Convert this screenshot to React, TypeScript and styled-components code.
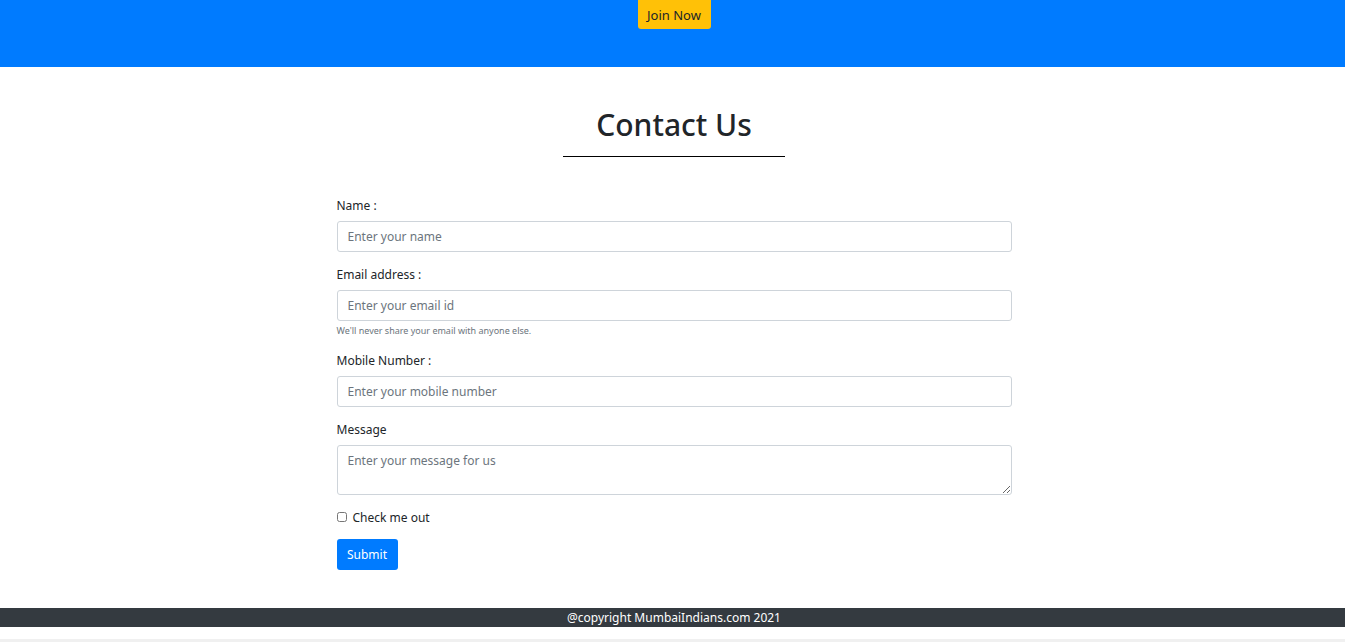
import React, { useState } from 'react'
import styled, { createGlobalStyle } from 'styled-components'

const GlobalStyle = createGlobalStyle`
  * {
    box-sizing: border-box;
  }
  body {
    margin: 0;
    background: #fff;
    color: #212529;
    font-family: 'Noto Sans', 'Open Sans', Arial, sans-serif;
  }
`

const Header = styled.header`
  background: #007bff;
  height: 67px;
  display: flex;
  justify-content: center;
  align-items: flex-start;
  padding-left: 3px;
`

const JoinButton = styled.button`
  height: 29px;
  width: 73px;
  border: none;
  border-radius: 0 0 3px 3px;
  background: #ffc107;
  color: #212529;
  font-family: inherit;
  font-size: 13px;
  padding: 0;
  cursor: pointer;
`

const Main = styled.main`
  display: flex;
  flex-direction: column;
  align-items: center;
  padding: 37px 0 38px 3px;
`

const Title = styled.h2`
  margin: 0;
  display: inline-block;
  padding: 0 33px 11px;
  border-bottom: 1px solid #000;
  font-size: 30px;
  font-weight: 500;
  line-height: 41px;
  color: #212529;
`

const Form = styled.form`
  width: 675px;
  margin-top: 40px;
`

const Group = styled.div<{ $extra?: number }>`
  margin-bottom: ${p => 14 + (p.$extra || 0)}px;
`

const Label = styled.label`
  display: block;
  font-size: 12px;
  line-height: 18px;
  margin-bottom: 6px;
  color: #212529;
`

const Field = styled.input`
  display: block;
  width: 100%;
  height: 31px;
  padding: 0 10px;
  border: 1px solid #ced4da;
  border-radius: 3px;
  font-family: inherit;
  font-size: 12px;
  color: #495057;
  &::placeholder {
    color: #6c757d;
  }
`

const Area = styled.textarea`
  display: block;
  width: 100%;
  height: 50px;
  padding: 6px 10px;
  border: 1px solid #ced4da;
  border-radius: 3px;
  font-family: inherit;
  font-size: 12px;
  color: #495057;
  resize: vertical;
  &::placeholder {
    color: #6c757d;
  }
`

const Help = styled.small`
  display: block;
  margin-top: 3px;
  font-size: 9px;
  line-height: 13px;
  color: #6c757d;
`

const CheckRow = styled.label`
  display: flex;
  align-items: center;
  gap: 6px;
  font-size: 12px;
  line-height: 18px;
  margin-bottom: 12px;
`

const Check = styled.input`
  margin: 0 0 3px;
  width: 10px;
  height: 10px;
`

const SubmitButton = styled.button`
  height: 31px;
  width: 61px;
  border: none;
  border-radius: 3px;
  background: #007bff;
  color: #fff;
  font-family: inherit;
  font-size: 12px;
  cursor: pointer;
`

const Footer = styled.footer`
  background: #343a40;
  color: #fff;
  height: 19px;
  line-height: 19px;
  font-size: 12px;
  text-align: center;
  padding-left: 3px;
`

const Strip = styled.div`
  height: 3px;
  margin-top: 12px;
  background: #f0f0f0;
`

const App: React.FC = () => {
  const [checked, setChecked] = useState(false)

  return (
    <>
      <GlobalStyle />
      <Header>
        <JoinButton>Join Now</JoinButton>
      </Header>
      <Main>
        <Title>Contact Us</Title>
        <Form onSubmit={e => e.preventDefault()}>
          <Group>
            <Label htmlFor="name">Name :</Label>
            <Field id="name" type="text" placeholder="Enter your name" />
          </Group>
          <Group $extra={1}>
            <Label htmlFor="email">Email address :</Label>
            <Field id="email" type="email" placeholder="Enter your email id" />
            <Help>We'll never share your email with anyone else.</Help>
          </Group>
          <Group>
            <Label htmlFor="mobile">Mobile Number :</Label>
            <Field id="mobile" type="text" placeholder="Enter your mobile number" />
          </Group>
          <Group>
            <Label htmlFor="message">Message</Label>
            <Area id="message" placeholder="Enter your message for us" />
          </Group>
          <CheckRow>
            <Check type="checkbox" checked={checked} onChange={() => setChecked(!checked)} />
            Check me out
          </CheckRow>
          <SubmitButton type="submit">Submit</SubmitButton>
        </Form>
      </Main>
      <Footer>@copyright MumbaiIndians.com 2021</Footer>
      <Strip />
    </>
  )
}

export default App
